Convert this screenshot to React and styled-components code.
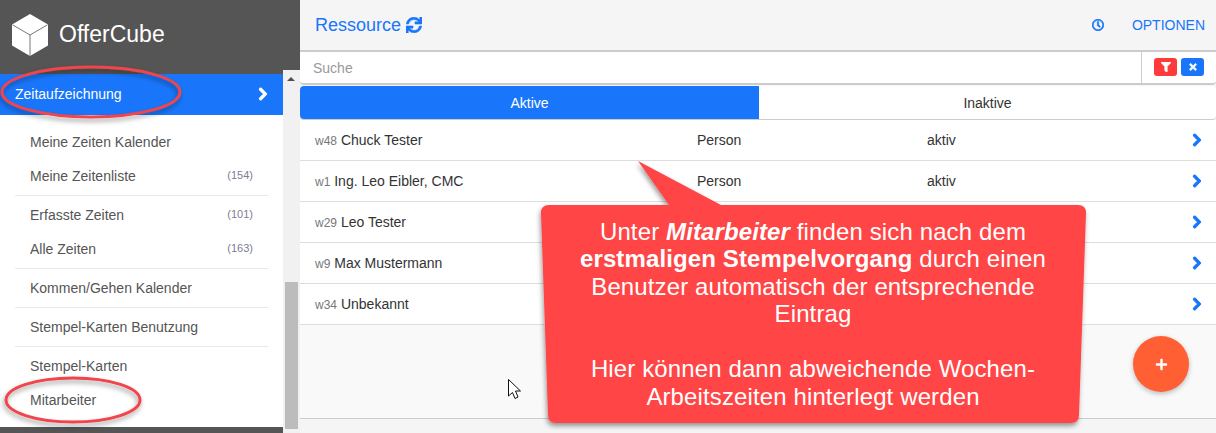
import React from 'react';
import styled, { createGlobalStyle } from 'styled-components';
import { FaSync, FaRegClock, FaFilter, FaTimes, FaPlus, FaChevronRight } from 'react-icons/fa';

const Global = createGlobalStyle`
  html, body { margin: 0; padding: 0; overflow: hidden; }
  body { font-family: "Liberation Sans", Arial, sans-serif; font-size: 14px; }
  * { box-sizing: border-box; }
`;

const Page = styled.div`
  position: relative;
  display: flex;
  width: 1216px;
  height: 433px;
  overflow: hidden;
  background: #f5f5f5;
`;

const Sidebar = styled.aside`
  display: flex;
  flex-direction: column;
  width: 300px;
  flex: none;
  background: #fff;
`;

const Brand = styled.div`
  display: flex;
  align-items: center;
  gap: 11px;
  height: 70px;
  flex: none;
  padding: 0 0 0 12px;
  background: #555;
  color: #fff;
  font-size: 23px;
  span { margin-top: -2px; }
`;

const NavRow = styled.div`
  display: flex;
  flex: 1;
  min-height: 0;
`;

const Nav = styled.nav`
  display: flex;
  flex-direction: column;
  width: 283px;
  flex: none;
  border-top: 4px solid #555;
  border-bottom: 6px solid #555;
`;

const ActiveItem = styled.div`
  display: flex;
  align-items: center;
  justify-content: space-between;
  height: 41px;
  flex: none;
  padding: 0 15px 2px;
  background: #1976fb;
  color: #fff;
  font-size: 14px;
  svg { font-size: 14px; margin-right: -2px; stroke: currentColor; stroke-width: 40; }
`;

const Menu = styled.div`
  padding: 8px 15px 0;
`;

const Group = styled.div`
  padding: 2px 0;
  border-bottom: ${(p) => (p.$last ? 'none' : '1px solid #e8e8e8')};
`;

const Item = styled.div`
  display: flex;
  align-items: center;
  justify-content: space-between;
  height: 34px;
  padding: 0 15px;
  color: #555;
  font-size: 14px;
`;

const Count = styled.span`
  position: relative;
  top: -1px;
  color: #7d7d92;
  font-size: 11px;
`;

const Scrollbar = styled.div`
  position: relative;
  flex: 1;
  background: #f1f1f1;
`;

const ScrollArrow = styled.div`
  position: absolute;
  top: 7px;
  left: 4px;
  border-left: 4px solid transparent;
  border-right: 4px solid transparent;
  border-bottom: 4px solid #505050;
`;

const ScrollThumb = styled.div`
  position: absolute;
  top: 212px;
  left: 2px;
  width: 13px;
  height: 147px;
  background: #bcbcbc;
`;

const Main = styled.main`
  display: flex;
  flex-direction: column;
  flex: 1;
  min-width: 0;
`;

const Toolbar = styled.header`
  display: flex;
  align-items: center;
  justify-content: space-between;
  height: 52px;
  flex: none;
  padding: 0 11px 0 15px;
  border-bottom: 2px solid #ccc;
  color: #1976fb;
`;

const Title = styled.div`
  display: flex;
  align-items: center;
  gap: 5px;
  font-size: 18px;
  svg { font-size: 16px; stroke: currentColor; stroke-width: 20; }
`;

const Options = styled.div`
  display: flex;
  align-items: center;
  gap: 28px;
  font-size: 14px;
  svg { font-size: 12px; stroke: currentColor; stroke-width: 30; }
`;

const SearchRow = styled.div`
  display: flex;
  height: 33px;
  flex: none;
  background: #fff;
  border-bottom: 2px solid #ccc;
  border-radius: 0 0 4px 4px;
`;

const SearchInput = styled.div`
  flex: 1;
  padding: 8px 13px;
  color: #999;
  font-size: 14px;
`;

const SearchActions = styled.div`
  display: flex;
  align-items: center;
  gap: 4px;
  width: 75px;
  padding: 0 0 2px 12px;
  border-left: 1px solid #ccc;
`;

const SmallButton = styled.span`
  display: flex;
  align-items: center;
  justify-content: center;
  width: 23px;
  height: 18px;
  border-radius: 3px;
  background: ${(p) => p.$bg};
  color: #fff;
  font-size: 10px;
  svg { stroke: currentColor; stroke-width: 30; }
`;

const Tabs = styled.div`
  display: flex;
  height: 34px;
  flex: none;
  margin-top: 1px;
  background: #fff;
  border-bottom: 1px solid #ccc;
  border-radius: 4px;
`;

const Tab = styled.div`
  display: flex;
  align-items: center;
  justify-content: center;
  width: ${(p) => (p.$active ? '459px' : 'auto')};
  flex: ${(p) => (p.$active ? 'none' : '1')};
  border-radius: ${(p) => (p.$active ? '4px 0 0 4px' : '0 4px 4px 0')};
  background: ${(p) => (p.$active ? '#1976fb' : 'transparent')};
  color: ${(p) => (p.$active ? '#fff' : '#333')};
  font-size: 14px;
`;

const Row = styled.div`
  display: grid;
  grid-template-columns: 382px 230px 1fr 16px;
  align-items: center;
  height: 41px;
  flex: none;
  padding: 0 10px 1px 15px;
  background: #fff;
  border-bottom: 1px solid #ddd;
  color: #333;
  font-size: 14px;
  svg { color: #1976fb; font-size: 14px; stroke: currentColor; stroke-width: 40; }
`;

const Code = styled.span`
  color: #777;
  font-size: 12px;
`;

const Empty = styled.div`
  position: relative;
  height: 94px;
  flex: none;
  background: #f9f9f9;
  border-bottom: 1px solid #ccc;
`;

const Fab = styled.div`
  position: absolute;
  top: 11px;
  right: 27px;
  display: flex;
  align-items: center;
  justify-content: center;
  width: 56px;
  height: 56px;
  border-radius: 50%;
  background: #ff5f33;
  box-shadow: 0 2px 5px rgba(0, 0, 0, 0.25);
  color: #fff;
  font-size: 13px;
`;

const Overlay = styled.svg`
  position: absolute;
  top: 0;
  left: 0;
  pointer-events: none;
`;

const CalloutText = styled.div`
  position: absolute;
  top: 217.500px;
  left: 560px;
  width: 506px;
  color: #fff;
  font-size: 24px;
  letter-spacing: 0.12px;
  line-height: 27.5px;
  text-align: center;
`;

// rows three to five have their type and status hidden under the callout
const rows = [
  ['w48', 'Chuck Tester', 'Person', 'aktiv'],
  ['w1', 'Ing. Leo Eibler, CMC', 'Person', 'aktiv'],
  ['w29', 'Leo Tester'],
  ['w9', 'Max Mustermann'],
  ['w34', 'Unbekannt'],
];

const groups = [
  [['Meine Zeiten Kalender'], ['Meine Zeitenliste', '(154)']],
  [['Erfasste Zeiten', '(101)'], ['Alle Zeiten', '(163)']],
  [['Kommen/Gehen Kalender']],
  [['Stempel-Karten Benutzung']],
  [['Stempel-Karten'], ['Mitarbeiter']],
];

function Cube() {
  return (
    <svg width="36" height="42" viewBox="0 0 36 42">
      <path d="M18 0 L36 10.500 V31.500 L18 42 L0 31.500 V10.500 Z" fill="#fff" />
      <path d="M0.500 10.800 L18 21 L35.500 10.800 M18 21 V42" fill="none" stroke="#777" strokeWidth="1" />
    </svg>
  );
}

export default function App() {
  return (
    <Page>
      <Global />
      <Sidebar>
        <Brand>
          <Cube />
          <span>OfferCube</span>
        </Brand>
        <NavRow>
          <Nav>
            <ActiveItem>
              Zeitaufzeichnung
              <FaChevronRight />
            </ActiveItem>
            <Menu>
              {groups.map((group, i) => (
                <Group key={i} $last={i === groups.length - 1}>
                  {group.map(([label, count]) => (
                    <Item key={label}>
                      {label}
                      {count && <Count>{count}</Count>}
                    </Item>
                  ))}
                </Group>
              ))}
            </Menu>
          </Nav>
          <Scrollbar>
            <ScrollArrow />
            <ScrollThumb />
          </Scrollbar>
        </NavRow>
      </Sidebar>
      <Main>
        <Toolbar>
          <Title>
            Ressource
            <FaSync />
          </Title>
          <Options>
            <FaRegClock />
            OPTIONEN
          </Options>
        </Toolbar>
        <SearchRow>
          <SearchInput>Suche</SearchInput>
          <SearchActions>
            <SmallButton $bg="#ff3a3a"><FaFilter /></SmallButton>
            <SmallButton $bg="#1976fb"><FaTimes /></SmallButton>
          </SearchActions>
        </SearchRow>
        <Tabs>
          <Tab $active>Aktive</Tab>
          <Tab>Inaktive</Tab>
        </Tabs>
        {rows.map(([code, name, type, status]) => (
          <Row key={code}>
            <span>
              <Code>{code}</Code> {name}
            </span>
            <span>{type}</span>
            <span>{status}</span>
            <FaChevronRight />
          </Row>
        ))}
        <Empty>
          <Fab><FaPlus /></Fab>
        </Empty>
      </Main>

      <Overlay width="1216" height="433" viewBox="0 0 1216 433">
        <defs>
          <filter id="shade" x="-10%" y="-10%" width="120%" height="130%">
            <feDropShadow dx="-1" dy="3" stdDeviation="2.500" floodColor="#000" floodOpacity="0.4" />
          </filter>
        </defs>
        <g fill="none" stroke="#f0444c" strokeWidth="3" filter="url(#shade)">
          <ellipse cx="91" cy="92" rx="89" ry="25" />
          <ellipse cx="73" cy="400" rx="67" ry="22" />
        </g>
        <path
          d="M549 205 H669 L638 161 L721 205 H1078 Q1086 205 1086 213 L1079 415 Q1079 423 1071 423 H556 Q548 423 548 415 L541 213 Q541 205 549 205 Z"
          fill="#ff4444"
          filter="url(#shade)"
        />
        <path
          d="M508.500 379.500 V396 L512.500 392.500 L515 398.500 L518 397 L515.500 391 L520.500 391 Z"
          fill="#fff"
          stroke="#111"
          strokeWidth="1"
        />
      </Overlay>
      <CalloutText>
        Unter <b><i>Mitarbeiter</i></b> finden sich nach dem
        <br />
        <b>erstmaligen Stempelvorgang</b> durch einen
        <br />
        Benutzer automatisch der entsprechende
        <br />
        Eintrag
        <br />
        <br />
        Hier können dann abweichende Wochen-
        <br />
        Arbeitszeiten hinterlegt werden
      </CalloutText>
    </Page>
  );
}
